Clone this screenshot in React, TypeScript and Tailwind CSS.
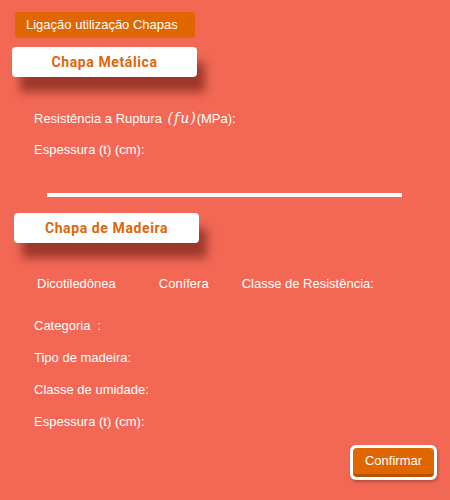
export default function App() {
  const label = "text-[13px] text-white leading-none";
  const titleFont = { fontFamily: "Roboto, 'DejaVu Sans Condensed', sans-serif" };
  return (
    <div className="w-[450px] h-[500px] bg-[#f26855] relative overflow-hidden" style={{ fontFamily: "'Liberation Sans', Arial, sans-serif" }}>
      <div className="flex flex-col">
        {/* top tag */}
        <div className="ml-[15px] mt-[12px] w-[180px] h-[26px] rounded-[3px] bg-[#e06600] flex items-center pl-[11px] text-[13px] text-white">
          Ligação utilização Chapas
        </div>

        {/* Chapa Metálica */}
        <div className="ml-[12px] mt-[9px] w-[185px] h-[30px] rounded-[4px] bg-white shadow-[8px_15px_10px_rgba(100,25,15,0.6)] flex items-center justify-center">
          <span className="text-[14px] font-bold text-[#e0660a] tracking-[0.6px]" style={titleFont}>
            Chapa Metálica
          </span>
        </div>

        <div className="ml-[34px] mt-[34px] flex flex-col gap-[18px]">
          <div className={label}>
            Resistência a Ruptura{" "}
            <span className="italic text-[14px] leading-none ml-[2px] tracking-[1px]" style={{ fontFamily: "'DejaVu Serif', serif" }}>(fu)</span>(MPa):
          </div>
          <div className={label}>Espessura (t) (cm):</div>
        </div>

        <div className="ml-[47px] mt-[37px] w-[355px] h-[4px] bg-white" />

        {/* Chapa de Madeira */}
        <div className="ml-[14px] mt-[16px] w-[185px] h-[30px] rounded-[4px] bg-white shadow-[8px_15px_10px_rgba(100,25,15,0.6)] flex items-center justify-center">
          <span className="text-[14px] font-bold text-[#e0660a] tracking-[0.6px]" style={titleFont}>
            Chapa de Madeira
          </span>
        </div>

        <div className="mt-[34px] flex text-[13px] text-white leading-none">
          <span className="ml-[37px]">Dicotiledônea</span>
          <span className="ml-[43px]">Conífera</span>
          <span className="ml-[33px]">Classe de Resistência:</span>
        </div>

        <div className="ml-[34px] mt-[29px] flex flex-col gap-[19px]">
          <div className={label}>Categoria &nbsp;:</div>
          <div className={label}>Tipo de madeira:</div>
          <div className={label}>Classe de umidade:</div>
          <div className={label}>Espessura (t) (cm):</div>
        </div>

        <div className="mt-[17px] mr-[13px] flex justify-end">
          <button className="w-[87px] h-[35px] rounded-[6px] bg-white p-[3px] shadow-[1px_2px_3px_rgba(0,0,0,0.25)]">
            <div className="w-full h-full rounded-[4px] bg-[#e06600] border-b-[3px] border-[#b85200] flex items-center justify-center text-[13px] text-white">
              Confirmar
            </div>
          </button>
        </div>
      </div>
    </div>
  );
}
